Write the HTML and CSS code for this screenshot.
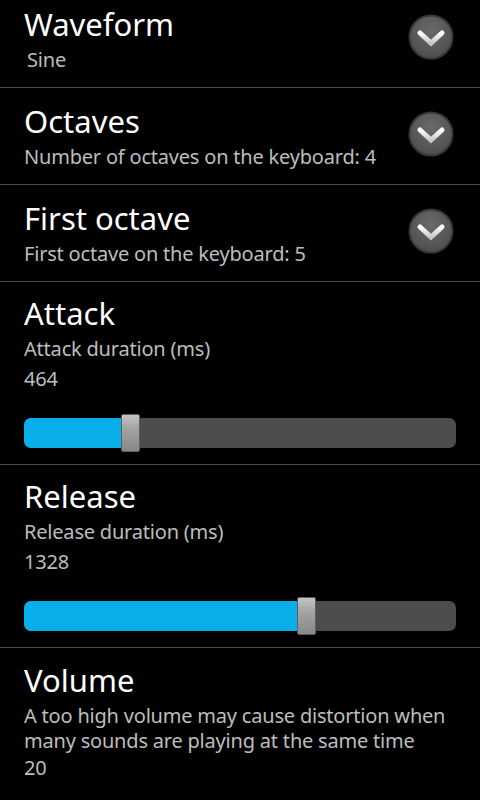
FILE: index.html
```html
<!DOCTYPE html>
<html>
<head>
<meta charset="utf-8">
<link rel="stylesheet" href="styles.css">
</head>
<body>
<div class="screen">
  <div class="pref list">
    <div class="texts">
      <div class="title">Waveform</div>
      <div class="summary indent">Sine</div>
    </div>
    <div class="drop"><svg viewBox="0 0 46 46" width="46" height="46"><defs><radialGradient id="g1" cx="50%" cy="35%" r="65%"><stop offset="0" stop-color="#6a6a6a"/><stop offset="1" stop-color="#4e4e4e"/></radialGradient><linearGradient id="c1" x1="0" y1="0" x2="0" y2="1"><stop offset="0" stop-color="#ffffff"/><stop offset="1" stop-color="#c8c8c8"/></linearGradient></defs><circle cx="23" cy="23" r="21.5" fill="url(#g1)" stroke="#393939" stroke-width="2"/><polyline points="12,19 23,29 34,19" fill="none" stroke="url(#c1)" stroke-width="5" stroke-linejoin="miter" stroke-linecap="round"/></svg></div>
  </div>
  <div class="pref list">
    <div class="texts">
      <div class="title">Octaves</div>
      <div class="summary">Number of octaves on the keyboard: 4</div>
    </div>
    <div class="drop"><svg viewBox="0 0 46 46" width="46" height="46"><circle cx="23" cy="23" r="21.5" fill="url(#g1)" stroke="#393939" stroke-width="2"/><polyline points="12,19 23,29 34,19" fill="none" stroke="url(#c1)" stroke-width="5" stroke-linejoin="miter" stroke-linecap="round"/></svg></div>
  </div>
  <div class="pref list">
    <div class="texts">
      <div class="title">First octave</div>
      <div class="summary">First octave on the keyboard: 5</div>
    </div>
    <div class="drop"><svg viewBox="0 0 46 46" width="46" height="46"><circle cx="23" cy="23" r="21.5" fill="url(#g1)" stroke="#393939" stroke-width="2"/><polyline points="12,19 23,29 34,19" fill="none" stroke="url(#c1)" stroke-width="5" stroke-linejoin="miter" stroke-linecap="round"/></svg></div>
  </div>
  <div class="pref seek">
    <div class="title">Attack</div>
    <div class="summary">Attack duration (ms)</div>
    <div class="value">464</div>
    <div class="slider">
      <div class="track"><div class="fill" style="width:22.45%"><div class="thumb"></div></div></div>
    </div>
  </div>
  <div class="pref seek">
    <div class="title">Release</div>
    <div class="summary">Release duration (ms)</div>
    <div class="value">1328</div>
    <div class="slider">
      <div class="track"><div class="fill" style="width:63.2%"><div class="thumb"></div></div></div>
    </div>
  </div>
  <div class="pref volume">
    <div class="title">Volume</div>
    <div class="summary multi">A too high volume may cause distortion when many sounds are playing at the same time</div>
    <div class="value">20</div>
  </div>
</div>
</body>
</html>
```
FILE: styles.css
```css
html, body {
  margin: 0;
  padding: 0;
  background: #000;
  width: 480px;
  height: 800px;
  overflow: hidden;
}
body {
  font-family: "Noto Sans", "Open Sans", "DejaVu Sans", sans-serif;
  color: #fff;
}
.screen {
  margin-top: -9px;
}
.pref {
  border-bottom: 1px solid #4a4a4a;
  padding: 0 24px;
}
.list {
  height: 97px;
  box-sizing: border-box;
  padding-top: 12px;
  display: flex;
  align-items: flex-start;
  justify-content: space-between;
  padding-right: 26px;
}
.texts {
  display: flex;
  flex-direction: column;
}
.title {
  font-size: 31px;
  line-height: 42px;
  color: #fff;
}
.summary {
  font-size: 20px;
  letter-spacing: -0.2px;
  line-height: 30px;
  color: #bdbdbd;
}
.indent {
  padding-left: 3px;
}
.value {
  font-size: 20px;
  letter-spacing: -0.2px;
  line-height: 30px;
  color: #bdbdbd;
}
.drop {
  width: 46px;
  height: 46px;
  margin-top: 11px;
}
.drop svg {
  display: block;
}
.seek {
  height: 183px;
  box-sizing: border-box;
  padding-top: 10px;
}
.slider {
  margin-top: 20px;
  height: 38px;
  display: flex;
  align-items: center;
}
.track {
  width: 100%;
  height: 30px;
  background: #4b4e4b;
  border-radius: 7px;
  display: flex;
}
.fill {
  position: relative;
  height: 100%;
  background: #08aeea;
  border-radius: 7px 0 0 7px;
}
.thumb {
  position: absolute;
  left: 100%;
  top: -4px;
  width: 17px;
  height: 36px;
  border: 1px solid #5e5e5e;
  border-radius: 2px;
  background: linear-gradient(#c4c4c4, #a2a2a2 40%, #888888);
}
.volume {
  padding-top: 11px;
  border-bottom: none;
}
.multi {
  line-height: 25px;
  margin-top: 2px;
}
```
